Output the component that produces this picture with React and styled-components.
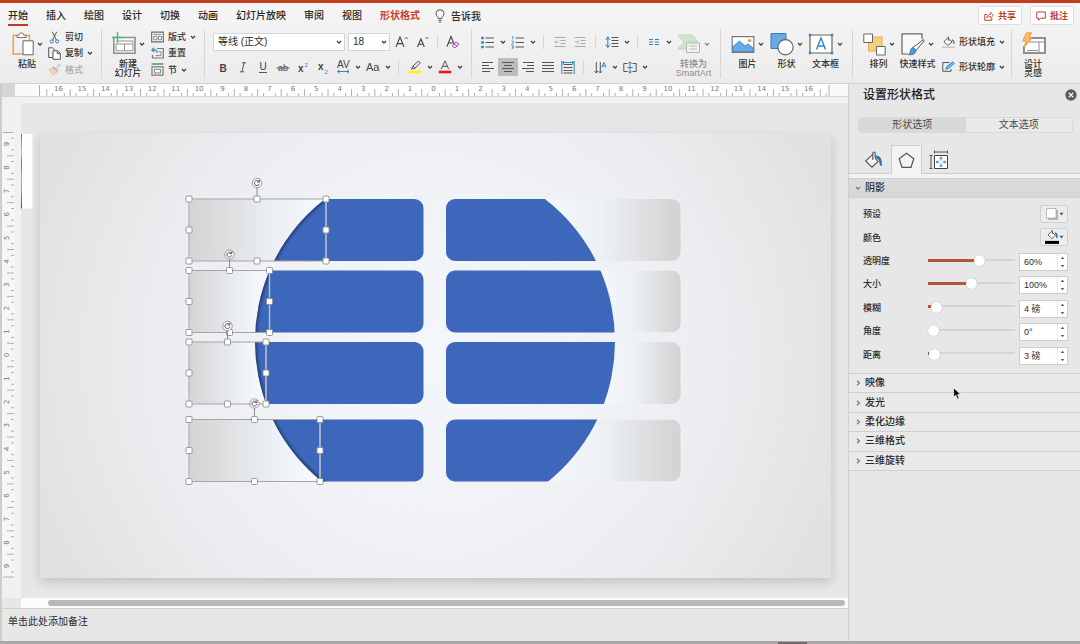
import React, { useState } from "react";
import styled, { createGlobalStyle } from "styled-components";

const GlobalStyle = createGlobalStyle`
  * {
    box-sizing: border-box;
  }
  body {
    margin: 0;
    background: #e7e7e7;
    font-family: "Liberation Sans", "Noto Sans CJK SC", sans-serif;
    color: #2b2b2b;
  }
  button, input, select, textarea {
    font: inherit;
    color: inherit;
    margin: 0;
  }
`;

const Window = styled.div`
  display: flex;
  flex-direction: column;
  min-height: 100vh;
  border-top: 3px solid #c03d1e;
`;

const Header = styled.header`
  background: linear-gradient(#f6f5f5, #f1f0f0 60%, #ebebeb);
  border-bottom: 1px solid #d2d2d2;
`;

const TabBar = styled.nav`
  display: flex;
  align-items: center;
  height: 25px;
  padding: 0 6px 0 8px;
  gap: 18px;
`;

const TabLink = styled.a`
  height: 21px;
  line-height: 21px;
  font-size: 10px;
  font-weight: ${(props) => (props.$accent ? 700 : 500)};
  color: ${(props) => (props.$accent ? "#c8422a" : "#262626")};
  text-decoration: none;
  border-bottom: 2px solid ${(props) => (props.$active ? "#c33a20" : "transparent")};
  white-space: nowrap;
`;

const TellMe = styled.button`
  display: flex;
  align-items: center;
  gap: 6px;
  margin-left: -3px;
  padding: 0;
  border: none;
  background: none;
  font-size: 10px;
  font-weight: 500;
`;

const HeaderActions = styled.div`
  display: flex;
  gap: 8px;
  margin-left: auto;
`;

const ActionButton = styled.button`
  display: flex;
  align-items: center;
  justify-content: center;
  gap: 4px;
  width: 44px;
  height: 19px;
  padding: 0;
  border: 1px solid #dedede;
  border-radius: 2px;
  background: white;
  color: #b8442c;
  font-size: 9px;
  font-weight: 700;
`;

const RibbonBar = styled.div`
  display: flex;
  height: 55px;
  padding: 1px 0 5px;
`;

const Group = styled.div`
  display: flex;
  width: ${(props) => props.$width}px;
  padding-left: ${(props) => props.$pad || 0}px;
  border-right: ${(props) => (props.$last ? "none" : "1px solid #d6d6d6")};
`;

const SmallColumn = styled.div`
  display: flex;
  flex-direction: column;
  gap: ${(props) => props.$gap || 0}px;
  padding-top: ${(props) => (props.$gap ? 4 : 0)}px;
  margin-left: ${(props) => props.$indent || 0}px;
`;

const SmallButton = styled.button`
  display: flex;
  align-items: center;
  gap: 4px;
  height: ${(props) => (props.$tall ? 18 : 17)}px;
  padding: 0;
  border: none;
  background: none;
  font-size: 9px;
  font-weight: 500;
  line-height: 12px;
  white-space: nowrap;
  color: ${(props) => (props.disabled ? "#a9a9a9" : "#303030")};
`;

const BigButton = styled.button`
  display: flex;
  flex-direction: column;
  align-items: center;
  width: ${(props) => props.$width || 39}px;
  padding: 3px 0 0;
  border: none;
  background: none;
  font-size: 9px;
  font-weight: 500;
  line-height: 9px;
  white-space: nowrap;
  color: ${(props) => (props.disabled ? "#8d8d8d" : "#303030")};
`;

const BigIcon = styled.span`
  display: flex;
  align-items: center;
  gap: 3px;
  height: 24px;
  margin-bottom: 4px;
  opacity: ${(props) => (props.$faded ? 0.6 : 1)};
`;

const ToolRows = styled.div`
  display: flex;
  flex-direction: column;
  gap: 7px;
  padding-top: 4px;
`;

const ToolRow = styled.div`
  display: flex;
  align-items: center;
  height: 18px;
`;

const ToolButton = styled.button`
  display: flex;
  align-items: center;
  justify-content: center;
  width: ${(props) => props.$width || 20}px;
  height: 18px;
  padding: 0;
  border: none;
  border-radius: 1px;
  background: ${(props) => (props.$active ? "#bdbdbd" : "none")};
  opacity: ${(props) => (props.disabled ? 0.45 : 1)};
  color: #444;
`;

const RowDivider = styled.span`
  width: 1px;
  height: 14px;
  margin: 0 6px 0 5px;
  background: #d6d6d6;
`;

const SelectBox = styled.label`
  position: relative;
  display: block;
  width: ${(props) => props.$width}px;
  margin-right: ${(props) => props.$after || 0}px;
  select {
    display: block;
    appearance: none;
    width: 100%;
    height: 18px;
    padding: 0 12px 0 4px;
    border: 1px solid #d4d4d4;
    border-radius: 1px;
    background: white;
    font-size: 10px;
    line-height: 14px;
  }
  svg {
    position: absolute;
    right: 3px;
    top: 6px;
    pointer-events: none;
  }
`;

const Body = styled.main`
  display: flex;
  flex: 1;
  border-left: 2px solid #cdcdcd;
`;

const Workspace = styled.section`
  display: flex;
  flex-direction: column;
  flex: 1;
  min-width: 0;
`;

const RulerSvg = styled.svg`
  display: block;
  flex: none;
  width: ${(props) => (props.$vertical ? "13px" : "100%")};
  background: #f0f0f0;
`;

const Stage = styled.div`
  display: flex;
  align-items: flex-start;
`;

const Canvas = styled.div`
  flex: 1;
  padding: 6px 0 0 6px;
  background: #f1f1f1;
  svg {
    display: block;
    width: 100%;
    background: #e7e7e8;
  }
`;

const ScrollTrack = styled.div`
  height: 10px;
  margin-left: 19px;
  padding: 2px 3px 2px 27px;
  background: #fbfbfb;
`;

const ScrollThumb = styled.div`
  height: 6px;
  border-radius: 3px;
  background: #b8b8b8;
`;

const Notes = styled.textarea`
  flex: 1 1 auto;
  display: block;
  width: 100%;
  height: 33px;
  padding: 5px 6px;
  border: none;
  border-top: 1px solid #cfcfcf;
  background: #e7e7e7;
  resize: none;
  outline: none;
  overflow: hidden;
  font-family: "Liberation Serif", "Noto Sans CJK SC", serif;
  font-size: 10px;
  line-height: 15px;
`;

const WindowEdge = styled.footer`
  display: flex;
  justify-content: flex-end;
  height: 3px;
  padding: 1px 273px 0 0;
  background: #a9a7a8;
  &::after {
    content: "";
    width: 29px;
    background: #6f6b6c;
  }
`;

const Panel = styled.aside`
  position: relative;
  flex: none;
  width: 232px;
  border-left: 1px solid #cfcfcf;
  background: #e7e7e7;
`;

const PanelHeader = styled.div`
  display: flex;
  align-items: center;
  justify-content: space-between;
  height: 22px;
  padding: 0 3px 0 14px;
  h2 {
    margin: 0;
    font-size: 12px;
    font-weight: 500;
    line-height: 20px;
    color: #222;
  }
  button {
    display: flex;
    padding: 0;
    border: none;
    background: none;
  }
`;

const Segments = styled.div`
  display: grid;
  grid-template-columns: 1fr 1fr;
  margin: 11px 7px 0 9px;
  border: 1px solid #dadada;
  border-radius: 3px;
  overflow: hidden;
`;

const Segment = styled.button`
  height: 14px;
  padding: 0;
  border: none;
  background: ${(props) => (props.$active ? "#d8d8d8" : "#e9e9e9")};
  color: #4a4a4a;
  font-size: 10px;
  line-height: 14px;
`;

const IconTabs = styled.div`
  display: flex;
  height: 41px;
  padding: 12px 0 0 8px;
  border-bottom: 1px solid #cdcdcd;
  box-shadow: 0 4px 0 #f3f3f3;
`;

const IconTab = styled.button`
  display: flex;
  align-items: center;
  justify-content: center;
  width: ${(props) => (props.$active ? 31 : 34)}px;
  height: ${(props) => (props.$active ? 29 : 28)}px;
  padding: 0;
  border: 1px solid ${(props) => (props.$active ? "#cdcdcd" : "transparent")};
  border-bottom: none;
  background: ${(props) => (props.$active ? "#f3f3f3" : "none")};
`;

const SectionHead = styled.button`
  display: flex;
  align-items: center;
  gap: 4px;
  width: 100%;
  height: ${(props) => (props.$open ? "20px" : "100%")};
  margin-top: ${(props) => (props.$open ? 4 : 0)}px;
  padding: 0 6px;
  border: none;
  border-top: 1px solid #d0d0d0;
  border-bottom: ${(props) => (props.$open ? "1px solid #d0d0d0" : "none")};
  background: ${(props) => (props.$open ? "linear-gradient(#dcdcdc, #d6d6d6)" : "#e9e9e9")};
  font-size: 10px;
  font-weight: 500;
  line-height: 14px;
`;

const Properties = styled.div`
  display: grid;
  grid-template-columns: minmax(0, 1fr);
  grid-auto-rows: 1fr;
  height: 164px;
  margin: 4px 12px 7px 14px;
`;

const PropertyRow = styled.div`
  display: flex;
  align-items: center;
  font-size: 9px;
  > label, > span {
    width: 65px;
    font-weight: 500;
  }
`;

const MenuButton = styled.button`
  display: flex;
  align-items: center;
  justify-content: space-between;
  width: 28px;
  height: 18px;
  margin-left: auto;
  padding: 0 3px 0 4px;
  border: 1px solid #cfcfcf;
  border-radius: 2px;
  background: #ececec;
`;

const Slider = styled.input`
  appearance: none;
  flex: 1;
  min-width: 0;
  height: 12px;
  margin-right: 4px;
  background: linear-gradient(#b5533a, #b5533a) left 4px / ${(props) => props.$fill}% 3px no-repeat,
    linear-gradient(#d4d4d4, #d4d4d4) left 4px / 100% 2px no-repeat;
  &::-webkit-slider-thumb {
    appearance: none;
    width: 11px;
    height: 11px;
    border-radius: 50%;
    background: white;
    box-shadow: 0 0 1px rgba(0, 0, 0, 0.35);
  }
`;

const SpinBox = styled.div`
  display: flex;
  width: 49px;
  height: 18px;
  margin-top: 3px;
  border: 1px solid #cdcdcd;
  background: white;
  input {
    flex: 1;
    min-width: 0;
    padding: 0 0 0 4px;
    border: none;
    outline: none;
    background: none;
    font-size: 9px;
    line-height: 12px;
  }
`;

const Steps = styled.div`
  display: flex;
  flex-direction: column;
  width: 10px;
  border-left: 1px dotted #d8d8d8;
  button {
    display: flex;
    flex: 1;
    align-items: center;
    justify-content: center;
    padding: 0;
    border: none;
    background: none;
  }
`;

const Sections = styled.div`
  display: grid;
  grid-auto-rows: 1fr;
  height: 98px;
  border-bottom: 1px solid #d0d0d0;
`;

const Pointer = styled.svg`
  position: absolute;
  left: 104px;
  top: 303px;
  pointer-events: none;
`;

function Icon({ w = 14, h = 14, vb, children }) {
  return (
    <svg
      width={w}
      height={h}
      viewBox={vb || `0 0 ${w} ${h}`}
      fill="none"
      stroke="#555"
      strokeWidth="1"
      aria-hidden="true"
    >
      {children}
    </svg>
  );
}

function Caret({ dir = "down", color = "#3c3c3c" }) {
  return (
    <Icon w={6} h={6}>
      <path
        d={dir === "down" ? "M1 2 L3 4.2 L5 2" : "M2 .7 L4.4 3 L2 5.3"}
        stroke={color}
        strokeWidth="1.2"
      />
    </Icon>
  );
}

function Lines({ rows, color = "#555" }) {
  return rows.map(([x1, x2], i) => (
    <path key={i} d={`M${x1} ${1.5 + i * 3} H${x2}`} stroke={color} />
  ));
}

const blue = "#2f86c6";

const icons = {
  bulb: (
    <Icon w={10} h={14}>
      <path d="M3.3 9.5 C3.3 7.8 1 7.2 1 4.6 A4 3.9 0 0 1 9 4.6 C9 7.2 6.7 7.8 6.7 9.5 Z M3.3 11.3 H6.7 M4 13 H6" />
    </Icon>
  ),
  share: (
    <Icon w={10} h={10}>
      <g stroke="#b8442c">
        <path d="M3 3.5 H.8 V9.3 H7.8 V7" />
        <path d="M2.8 7 C3 4.5 4.5 3.4 6.4 3.4 V1.2 L9.5 4.2 L6.4 7 V5.2 C4.8 5.2 3.6 5.8 2.8 7 Z" strokeWidth=".8" />
      </g>
    </Icon>
  ),
  comment: (
    <Icon w={10} h={10}>
      <path d="M.8 1 H9.3 V7.2 H4.6 L2.6 9.3 V7.2 H.8 Z" stroke="#b8442c" />
    </Icon>
  ),
  paste: (
    <Icon w={22} h={24}>
      <path d="M5.5 3.5 H1.2 V22 H10.5 M13.5 3.5 H17.5 V8" stroke="#eaa03e" strokeWidth="1.4" />
      <path d="M5 5.5 V3.2 H7 Q7 .8 9.4 .8 Q11.8 .8 11.8 3.2 H14 V5.5 Z" fill="#fff" stroke="#777" />
      <path d="M11 8.8 H21.2 V22.8 H11 Z" fill="#fff" stroke="#666" />
    </Icon>
  ),
  cut: (
    <Icon w={13} h={13}>
      <path d="M4.3 .8 L8.5 9.3 M8.7 .8 L4.5 9.3" />
      <g stroke={blue}>
        <circle cx="3.8" cy="10.4" r="1.6" />
        <circle cx="9.2" cy="10.4" r="1.6" />
      </g>
    </Icon>
  ),
  copy: (
    <Icon w={13} h={13}>
      <path d="M5 10.5 H.7 V.8 H4.4 L6.8 3 V4" />
      <path d="M5 3.8 H9.6 L12.3 6.3 V12.3 H5 Z M9.3 4 V6.6 H12" fill="#fff" />
    </Icon>
  ),
  painter: (
    <Icon w={13} h={13}>
      <g stroke="#c2bcb8">
        <path d="M8 4.6 L11.3 1 L12.4 2.2 L9.2 5.8" />
        <path d="M4.5 4.6 L9.2 9 L5 12 L1 6.8 Z" fill="#f3d3bd" stroke="#e3bfa8" />
        <path d="M5 3.8 L10 8.4" strokeWidth="1.6" />
      </g>
    </Icon>
  ),
  newSlide: (
    <Icon w={24} h={24}>
      <path d="M1.8 5.5 H23 V21.2 H1.8 Z" fill="#fff" stroke="#8f8f8f" strokeWidth="1.6" />
      <path d="M4 9 H21 V11.5 M4 12 H21 V18.8 H4 Z M12.5 12 V18.8" stroke="#8f8f8f" />
      <path d="M5.5 0 V11 M0 5.5 H11" stroke="#55b978" strokeWidth="1.4" />
    </Icon>
  ),
  layout: (
    <Icon w={13} h={12}>
      <path d="M.7 1.2 H12.3 V10.8 H.7 Z" fill="#fff" strokeWidth="1.2" stroke="#6a6a6a" />
      <path d="M2.5 3.3 H10.5 M2.8 5.3 H6 V8.8 H2.8 Z M7.4 5.3 H10.4 V8.8 H7.4 Z" stroke="#777" strokeWidth=".9" />
    </Icon>
  ),
  reset: (
    <Icon w={13} h={12}>
      <path d="M6 1.5 H12.3 V11 H1.5 V8" stroke="#777" strokeWidth="1.2" />
      <path d="M4.5 8.6 H10 V4.5 H7.5" stroke="#888" />
      <path d="M3.2 .6 L.9 2.9 L3.2 5.2 M1 2.9 H4 Q6.2 3 6 6" stroke={blue} strokeWidth="1.2" />
    </Icon>
  ),
  section: (
    <Icon w={13} h={13}>
      <path d="M.5 1 H12.5" stroke="#4fb070" strokeWidth="1.8" />
      <path d="M1 3.8 H12 V12.2 H1 Z" fill="#fff" stroke="#777" strokeWidth="1.2" />
      <path d="M3.3 6.2 H9.7 V10 H3.3 Z" stroke="#777" />
    </Icon>
  ),
  grow: (
    <Icon w={16} h={14}>
      <path d="M2 12 L6 2 L10 12 M3.4 8.6 H8.6" stroke="#444" strokeWidth="1.1" />
      <path d="M10.4 4 L12.2 2 L14 4" stroke={blue} />
    </Icon>
  ),
  shrink: (
    <Icon w={16} h={14}>
      <path d="M2.5 12 L5.9 4 L9.3 12 M3.7 9.2 H8" stroke="#444" strokeWidth="1.1" />
      <path d="M10.2 2 L11.8 3.8 L13.4 2" stroke={blue} />
    </Icon>
  ),
  clear: (
    <Icon w={14} h={14}>
      <path d="M1 11.5 L5 1.5 L8 8.5 M2.3 8 H7" stroke="#444" strokeWidth="1.1" />
      <path d="M6.3 10.6 L10 7 L13 9.2 L9.3 12.7 H8 Z M8 9 L11 11.2" fill="#f6e4f7" stroke="#a646ad" />
    </Icon>
  ),
  spacing: (
    <Icon w={14} h={14}>
      <path d="M.8 5 L2.8 1.8 L4.8 5 M2.8 1.8 V12.5 M.8 9.5 L2.8 12.5 L4.8 9.5" stroke={blue} />
      <path d="M6.5 2.5 H13.5 M6.5 5.5 H13.5 M6.5 8.5 H13.5 M6.5 11.5 H13.5" />
    </Icon>
  ),
  bullets: (
    <Icon w={14} h={13}>
      <path d="M4.5 2 H13 M4.5 6.5 H13 M4.5 11 H13" />
      <path d="M.5 1 H2.5 V3 H.5 Z M.5 5.5 H2.5 V7.5 H.5 Z M.5 10 H2.5 V12 H.5 Z" fill={blue} stroke={blue} strokeWidth=".6" />
    </Icon>
  ),
  numbers: (
    <Icon w={14} h={13}>
      <path d="M4.5 2 H13 M4.5 6.5 H13 M4.5 11 H13" />
      <path d="M.8 .9 L1.8 .4 V3.4 M.5 5.2 H2.3 V6.4 L.6 8 H2.5 M.5 9.7 H2.2 V12.3 H.5 M1 11 H2.2" stroke={blue} strokeWidth=".8" />
    </Icon>
  ),
  outdent: (
    <Icon w={12} h={12}>
      <path d="M.5 1.5 H11.5 M6.5 4.5 H11.5 M6.5 7.5 H11.5 M.5 10.5 H11.5" />
      <path d="M5 6 H.8 M2.6 4.2 L.8 6 L2.6 7.8" stroke={blue} />
    </Icon>
  ),
  indent: (
    <Icon w={12} h={12}>
      <path d="M.5 1.5 H11.5 M6.5 4.5 H11.5 M6.5 7.5 H11.5 M.5 10.5 H11.5" />
      <path d="M.5 6 H4.8 M3 4.2 L4.8 6 L3 7.8" stroke={blue} />
    </Icon>
  ),
  columns: (
    <Icon w={12} h={8}>
      <path d="M1 1.5 H5 M1 4 H5 M1 6.5 H5 M7 1.5 H11 M7 4 H11 M7 6.5 H11" stroke={blue} />
    </Icon>
  ),
  left: (
    <Icon w={12} h={13}>
      <Lines rows={[[0, 11], [0, 7], [0, 12], [0, 8]]} />
    </Icon>
  ),
  center: (
    <Icon w={12} h={13}>
      <Lines rows={[[0, 12], [2, 10], [0, 12], [2, 10]]} />
    </Icon>
  ),
  right: (
    <Icon w={12} h={13}>
      <Lines rows={[[1, 12], [5, 12], [0, 12], [4, 12]]} />
    </Icon>
  ),
  justify: (
    <Icon w={12} h={13}>
      <Lines rows={[[0, 12], [0, 12], [0, 12], [0, 12]]} />
    </Icon>
  ),
  distribute: (
    <Icon w={14} h={13}>
      <path d="M2.5 3.5 H11.5 M2.5 6.5 H11.5 M2.5 9.5 H11.5 M2.5 12 H11.5" />
      <path d="M.8 0 V13 M13.2 0 V13 M1 1.5 H13 M3 .2 L1.5 1.5 L3 2.8 M11 .2 L12.5 1.5 L11 2.8" stroke={blue} />
    </Icon>
  ),
  textDir: (
    <Icon w={13} h={13}>
      <path d="M2.3 1 V12 M.5 10 L2.3 12 L4 10 M6.3 1 V12 M4.8 10.3 L6.3 12 L8 10.3" />
      <path d="M7.8 6.5 L9.9 1.5 L12 6.5 M8.6 5 H11.2" stroke={blue} />
    </Icon>
  ),
  alignText: (
    <Icon w={14} h={13}>
      <path d="M4.5 2.5 H.8 V10.5 H4.5 M9.5 2.5 H13.2 V10.5 H9.5" />
      <path d="M7 .8 V12.2 M5.4 2.6 L7 .8 L8.6 2.6 M5.4 10.4 L7 12.2 L8.6 10.4 M4.2 6.5 H9.8" stroke={blue} />
    </Icon>
  ),
  smartArt: (
    <Icon w={24} h={20}>
      <path d="M.8 1 H15 L21 8 H11 V13 L9 15 H1 L7 8 Z" fill="#b5dcb8" stroke="#93c69a" />
      <path d="M9.5 9 H22.5 V18.5 H9.5 Z" fill="#f5f5f5" stroke="#8e8e8e" />
      <path d="M12 12 H20 M12 15 H20" stroke="#9a9a9a" />
    </Icon>
  ),
  picture: (
    <Icon w={24} h={20}>
      <path d="M1.2 2.7 H22.8 V18.3 H1.2 Z" fill="#fff" stroke="#777" strokeWidth="1.2" />
      <path d="M2 17.5 V12.5 L8.5 7 L14 12 L17 9.8 L22 14 V17.5 Z" fill="#6aaae4" stroke="#2f7fc5" strokeWidth=".8" />
      <circle cx="18.6" cy="6.6" r="1.7" fill="#ee9b3e" stroke="none" />
    </Icon>
  ),
  shapes: (
    <Icon w={24} h={24}>
      <path d="M1 1.5 H16 V16.5 H1 Z" fill="#6aaae4" stroke="#2f7fc5" />
      <circle cx="15.5" cy="15.3" r="7.6" fill="#fff" stroke="#666" strokeWidth="1.2" />
    </Icon>
  ),
  textBox: (
    <Icon w={26} h={22}>
      <path d="M2 2 H24 V20 H2 Z" fill="#fff" stroke="#666" strokeWidth="1.2" />
      <path d="M8.5 16.5 L13 5 L17.5 16.5 M10 13 H16" stroke={blue} strokeWidth="1.4" />
      <path d="M.8 .8 H3.2 V3.2 H.8 Z M22.8 .8 H25.2 V3.2 H22.8 Z M.8 18.8 H3.2 V21.2 H.8 Z M22.8 18.8 H25.2 V21.2 H22.8 Z" fill={blue} stroke="none" />
    </Icon>
  ),
  arrange: (
    <Icon w={23} h={24}>
      <path d="M5.5 5 H19 V19 H5.5 Z" fill="#f8cf7c" stroke="#e8ad4c" />
      <path d="M.8 2 H9.5 V10.5 H.8 Z M13.5 14.5 H22.2 V23 H13.5 Z" fill="#fff" stroke="#666" />
    </Icon>
  ),
  styles: (
    <Icon w={24} h={24}>
      <path d="M21 7 V1.8 H1 V22 H7" fill="#f8f8f8" stroke="#666" strokeWidth="1.2" />
      <path d="M12 15.5 L22.5 7.5 L23 9 L15 18.5 Z" fill="#fff" stroke="#555" />
      <path d="M12 15.5 L15 18.5 Q14.5 23 7.5 22.8 Q10 21 9.5 18.5 Q10 16 12 15.5 Z" fill="#4e9ad9" stroke="#2b78bb" />
    </Icon>
  ),
  fill: (
    <Icon w={13} h={12}>
      <path d="M5.5 2 L10 6 L6 9.3 L2 5.8 Z M6.4 .6 V4.8" fill="#fff" />
      <path d="M9.8 4 Q12.2 4.4 12 8" stroke={blue} strokeWidth="1.3" />
      <path d="M0 11.2 H13" stroke="#c9c9c9" strokeWidth="1.6" />
    </Icon>
  ),
  outline: (
    <Icon w={13} h={12}>
      <path d="M7.5 1.5 H.8 V10.3 H9 V8" />
      <path d="M3.8 8.2 L4.6 5.8 L10.7 .8 L12.3 2.5 L6.2 7.6 Z" fill="#7cbaea" stroke={blue} />
    </Icon>
  ),
  designer: (
    <Icon w={25} h={24}>
      <path d="M6 6 H24 V21 H3 V14" fill="#fff" stroke="#8f8f8f" strokeWidth="2" />
      <path d="M8 10 H23 M18 10 V20 M6 18.5 H17" stroke="#8f8f8f" />
      <path d="M5.5 .8 H10.5 L8 6 H11 L3 15.5 L5 9 H1.8 Z" fill="#f8bd6c" stroke="#ec9a3c" />
    </Icon>
  ),
};

const glyph = { fontFamily: "Liberation Sans, sans-serif", stroke: "none", fill: "#444" };

// letter based tools are drawn as live text inside the icon box
function LetterIcon({ kind }) {
  switch (kind) {
    case "bold":
      return (
        <Icon w={12} h={13}>
          <text x="2.5" y="10.5" fontSize="10" fontWeight="bold" {...glyph}>B</text>
        </Icon>
      );
    case "italic":
      return (
        <Icon w={12} h={13}>
          <path d="M5 1.8 H9 M3 10.8 H7 M7 1.8 L5 10.8" />
        </Icon>
      );
    case "underline":
      return (
        <Icon w={12} h={14}>
          <text x="2.5" y="10" fontSize="10" {...glyph}>U</text>
          <path d="M2 12.5 H10" />
        </Icon>
      );
    case "strike":
      return (
        <Icon w={14} h={13}>
          <text x="2" y="10" fontSize="9" {...glyph}>ab</text>
          <path d="M.5 7 H13.5" />
        </Icon>
      );
    case "sup":
      return (
        <Icon w={14} h={13}>
          <text x="2" y="11" fontSize="10" fontWeight="bold" {...glyph}>x</text>
          <text x="8.5" y="6" fontSize="6" {...glyph} fill={blue}>2</text>
        </Icon>
      );
    case "sub":
      return (
        <Icon w={14} h={14}>
          <text x="2" y="10" fontSize="10" fontWeight="bold" {...glyph}>x</text>
          <text x="8.5" y="13.5" fontSize="6" {...glyph} fill={blue}>2</text>
        </Icon>
      );
    case "kerning":
      return (
        <Icon w={15} h={14}>
          <text x="1" y="8" fontSize="10" {...glyph}>AV</text>
          <path d="M1.5 11.5 H13 M3.5 9.7 L1.5 11.5 L3.5 13.3 M11 9.7 L13 11.5 L11 13.3" stroke={blue} />
        </Icon>
      );
    case "case":
      return (
        <Icon w={16} h={13}>
          <text x="1" y="10" fontSize="11" {...glyph}>Aa</text>
        </Icon>
      );
    case "highlight":
      return (
        <Icon w={14} h={14}>
          <path d="M3.5 9 L5 6 L10.5 1 L12.3 3 L7 8.2 Z M5 6 L7 8.2" />
          <path d="M.5 12 H13.5" stroke="#fbf21c" strokeWidth="2.6" />
        </Icon>
      );
    default:
      return (
        <Icon w={14} h={14}>
          <path d="M3.4 9 L7 .8 L10.6 9 M4.7 6.3 H9.3" />
          <path d="M.8 12 H13.2" stroke="#e8141b" strokeWidth="2.6" />
        </Icon>
      );
  }
}

function Tool({ label, icon, menu, active, disabled, width }) {
  return (
    <>
      <ToolButton type="button" aria-label={label} $active={active} $width={width} disabled={disabled}>
        {icon}
      </ToolButton>
      {menu && (
        <ToolButton type="button" aria-label={`${label}选项`} $width={10}>
          <Caret />
        </ToolButton>
      )}
    </>
  );
}

function Big({ icon, lines, width, menu = true, disabled }) {
  return (
    <BigButton type="button" $width={width} disabled={disabled}>
      <BigIcon $faded={disabled}>
        {icon}
        {menu && <Caret />}
      </BigIcon>
      {lines.map((line) => (
        <span key={line}>{line}</span>
      ))}
    </BigButton>
  );
}

function Small({ icon, label, menu, disabled, tall }) {
  return (
    <SmallButton type="button" disabled={disabled} $tall={tall}>
      {icon}
      {label}
      {menu && <Caret />}
    </SmallButton>
  );
}

function Ribbon() {
  return (
    <RibbonBar>
      <Group $width={102} $pad={10}>
        <Big icon={icons.paste} lines={["粘贴"]} width={34} />
        <SmallColumn $indent={4}>
          <Small icon={icons.cut} label="剪切" />
          <Small icon={icons.copy} label="复制" menu />
          <Small icon={icons.painter} label="格式" disabled />
        </SmallColumn>
      </Group>
      <Group $width={103} $pad={8}>
        <Big icon={icons.newSlide} lines={["新建", "幻灯片"]} width={36} />
        <SmallColumn $indent={5}>
          <Small icon={icons.layout} label="版式" menu />
          <Small icon={icons.reset} label="重置" />
          <Small icon={icons.section} label="节" menu />
        </SmallColumn>
      </Group>
      <Group $width={267} $pad={8}>
        <ToolRows>
          <ToolRow>
            <SelectBox $width={132} $after={3}>
              <select aria-label="字体">
                <option>等线 (正文)</option>
              </select>
              <Caret />
            </SelectBox>
            <SelectBox $width={42}>
              <select aria-label="字号">
                <option>18</option>
              </select>
              <Caret />
            </SelectBox>
            <Tool label="增大字号" icon={icons.grow} width={24} />
            <Tool label="减小字号" icon={icons.shrink} width={18} />
            <RowDivider />
            <Tool label="清除格式" icon={icons.clear} width={18} />
          </ToolRow>
          <ToolRow>
            <Tool label="加粗" icon={<LetterIcon kind="bold" />} />
            <Tool label="倾斜" icon={<LetterIcon kind="italic" />} />
            <Tool label="下划线" icon={<LetterIcon kind="underline" />} />
            <Tool label="删除线" icon={<LetterIcon kind="strike" />} />
            <Tool label="上标" icon={<LetterIcon kind="sup" />} />
            <Tool label="下标" icon={<LetterIcon kind="sub" />} />
            <Tool label="字符间距" icon={<LetterIcon kind="kerning" />} menu />
            <Tool label="更改大小写" icon={<LetterIcon kind="case" />} menu />
            <RowDivider />
            <Tool label="突出显示" icon={<LetterIcon kind="highlight" />} menu />
            <Tool label="字体颜色" icon={<LetterIcon kind="color" />} menu />
          </ToolRow>
        </ToolRows>
      </Group>
      <Group $width={249} $pad={6}>
        <ToolRows>
          <ToolRow>
            <Tool label="项目符号" icon={icons.bullets} menu />
            <Tool label="编号" icon={icons.numbers} menu />
            <RowDivider />
            <Tool label="减少缩进" icon={icons.outdent} disabled />
            <Tool label="增加缩进" icon={icons.indent} disabled />
            <RowDivider />
            <Tool label="行距" icon={icons.spacing} menu />
            <RowDivider />
            <Tool label="分栏" icon={icons.columns} menu />
          </ToolRow>
          <ToolRow>
            <Tool label="左对齐" icon={icons.left} />
            <Tool label="居中" icon={icons.center} active />
            <Tool label="右对齐" icon={icons.right} />
            <Tool label="两端对齐" icon={icons.justify} />
            <Tool label="分散对齐" icon={icons.distribute} />
            <RowDivider />
            <Tool label="文字方向" icon={icons.textDir} menu />
            <Tool label="对齐文本" icon={icons.alignText} menu />
          </ToolRow>
        </ToolRows>
        <Big icon={icons.smartArt} lines={["转换为", "SmartArt"]} disabled />
      </Group>
      <Group $width={132} $pad={7}>
        <Big icon={icons.picture} lines={["图片"]} />
        <Big icon={icons.shapes} lines={["形状"]} />
        <Big icon={icons.textBox} lines={["文本框"]} />
      </Group>
      <Group $width={159} $pad={6}>
        <Big icon={icons.arrange} lines={["排列"]} />
        <Big icon={icons.styles} lines={["快速样式"]} />
        <SmallColumn $indent={5} $gap={7}>
          <Small icon={icons.fill} label="形状填充" menu tall />
          <Small icon={icons.outline} label="形状轮廓" menu tall />
        </SmallColumn>
      </Group>
      <Group $width={60} $last>
        <Big icon={icons.designer} lines={["设计", "灵感"]} width={42} menu={false} />
      </Group>
    </RibbonBar>
  );
}

const UNIT = 23.44;

function Ruler({ vertical }) {
  const count = vertical ? 9 : 16;
  const center = vertical ? 355 : 433.5;
  const start = vertical ? 132.5 : 39.5;
  const end = vertical ? 577 : 829;
  const ticks = [];
  for (let i = -count * 4 - 3; i <= count * 4 + 3; i++) {
    const pos = center + (i * UNIT) / 4;
    if (i % 4 === 0 || pos < start + 2 || pos > end - 2) continue;
    ticks.push([pos, Math.abs(i) % 4 === 2]);
  }
  const tick = (pos, size) => (vertical ? `M${14 - size} ${pos} h${size}` : `M${pos} 96 v-${size}`);
  return (
    <RulerSvg
      $vertical={vertical}
      viewBox={vertical ? "2 97 13 501" : "2 84 846 13"}
      aria-hidden="true"
    >
      {vertical ? (
        <path d="M2 132 H15 V577 H2 Z" fill="#f6f6f6" />
      ) : (
        <>
          <path d="M15 84 H848 V97 H15 Z" fill="#fafafa" />
          <path d="M39 84 H829 V97 H39 Z" fill="#fff" />
          <path d="M2 84 H15 V97 H2 Z" fill="#d6d6d6" />
          <path d="M15 96.5 H848" stroke="#d6d6d6" />
        </>
      )}
      <g stroke="#b0b0b0" strokeWidth="1" fill="none">
        {ticks.map(([pos, tall]) => (
          <path key={pos} d={tick(pos, tall ? 7 : 3)} />
        ))}
        <path d={tick(start, 11)} />
        <path d={tick(end, 11)} />
      </g>
      <g fontFamily="DejaVu Sans, sans-serif" fontSize="7" fill="#777" textAnchor="middle">
        {Array.from({ length: count * 2 + 1 }, (_, i) => {
          const pos = center + (i - count) * UNIT;
          return vertical ? (
            <text key={i} transform={`translate(9 ${pos}) rotate(-90)`}>
              {Math.abs(i - count)}
            </text>
          ) : (
            <text key={i} x={pos} y="91">
              {Math.abs(i - count)}
            </text>
          );
        })}
      </g>
    </RulerSvg>
  );
}

const rows = [
  { top: 199, leftEdge: 326, rightEdge: 545, rotateX: 257 },
  { top: 270.5, leftEdge: 269.5, rightEdge: 600, rotateX: 229.5 },
  { top: 342, leftEdge: 266, rightEdge: 604, rotateX: 227.5 },
  { top: 419.5, leftEdge: 320, rightEdge: 549, rotateX: 254.5 },
];
const CARD_HEIGHT = 62;

function Selection({ top, right, rotateX }) {
  const left = 189;
  const bottom = top + CARD_HEIGHT;
  const midY = top + CARD_HEIGHT / 2;
  const handles = [
    [left, top], [rotateX, top], [right, top],
    [left, midY], [right, midY],
    [left, bottom], [rotateX, bottom], [right, bottom],
  ];
  return (
    <g fill="none" stroke="#a3a5a9">
      <path d={`M${left} ${top} H${right} V${bottom} H${left} Z`} />
      <path d={`M${right} ${top} V${bottom}`} stroke="#b9c0cf" strokeWidth="1.4" />
      <path d={`M${rotateX} ${top} V${top - 11}`} stroke="#8d8d8d" />
      <circle cx={rotateX} cy={top - 16} r="4.7" fill="#fff" stroke="#999" />
      <path
        d={`M${rotateX + 1.8} ${top - 17.6} A2.5 2.5 0 1 0 ${rotateX + 2.4} ${top - 15.4} M${rotateX + 2.4} ${top - 19.3} V${top - 17} H${rotateX}`}
        stroke="#444"
        strokeWidth=".9"
      />
      {handles.map(([x, y]) => (
        <rect key={`${x}-${y}`} x={x - 3} y={y - 3} width="6" height="6" rx="1" fill="#fff" stroke="#8f8f8f" strokeWidth=".9" />
      ))}
    </g>
  );
}

function Slide() {
  return (
    <svg viewBox="21 103 827 495" role="img" aria-label="幻灯片">
      <defs>
        <radialGradient id="slideBg" gradientUnits="userSpaceOnUse" cx="435" cy="355" r="430">
          <stop offset="0" stopColor="#f3f6fb" />
          <stop offset=".35" stopColor="#f1f3f7" />
          <stop offset=".65" stopColor="#ebedf0" />
          <stop offset="1" stopColor="#e1e1e1" />
        </radialGradient>
        <linearGradient id="fadeRight">
          <stop offset="0" stopColor="#d4d4d4" />
          <stop offset=".25" stopColor="#dddedf" />
          <stop offset=".65" stopColor="#ecf0f5" />
          <stop offset="1" stopColor="#f8fafd" />
        </linearGradient>
        <linearGradient id="fadeLeft">
          <stop offset="0" stopColor="#f4f7fc" />
          <stop offset=".4" stopColor="#edf1f6" />
          <stop offset=".75" stopColor="#dddedf" />
          <stop offset="1" stopColor="#d2d2d2" />
        </linearGradient>
        <filter id="slideShadow" x="-5%" y="-5%" width="110%" height="115%">
          <feGaussianBlur stdDeviation="6" />
        </filter>
        <filter id="edgeBlur">
          <feGaussianBlur stdDeviation="1" />
        </filter>
        <clipPath id="leftCards">
          {rows.map((row) => (
            <rect key={row.top} x="189" y={row.top} width="234.5" height={CARD_HEIGHT} rx="9" />
          ))}
        </clipPath>
        <clipPath id="rightCards">
          {rows.map((row) => (
            <rect key={row.top} x="446" y={row.top} width="234.5" height={CARD_HEIGHT} rx="9" />
          ))}
        </clipPath>
        <clipPath id="disc">
          <circle cx="435" cy="341.5" r="180" />
        </clipPath>
        <linearGradient id="accents" gradientUnits="userSpaceOnUse" x1="0" y1="134" x2="0" y2="208">
          <stop offset="0" stopColor="#d93f5c" />
          <stop offset=".25" stopColor="#eebf55" />
          <stop offset=".4" stopColor="#3d9a55" />
          <stop offset=".6" stopColor="#8cd06a" />
          <stop offset=".75" stopColor="#57b6c4" />
          <stop offset="1" stopColor="#3c5468" />
        </linearGradient>
      </defs>
      <rect x="21" y="134" width="11.5" height="74.5" fill="#fff" />
      <rect x="21" y="134" width="1" height="74.5" fill="url(#accents)" />
      <rect x="40" y="138" width="791" height="444" fill="#000" opacity=".16" filter="url(#slideShadow)" />
      <rect x="40" y="133" width="791" height="445" fill="url(#slideBg)" />
      <g clipPath="url(#leftCards)">
        {rows.map((row) => (
          <rect key={row.top} x="189" y={row.top} width={row.leftEdge - 189} height={CARD_HEIGHT} fill="url(#fadeRight)" />
        ))}
        <circle cx="435" cy="341.5" r="180" fill="#3c67ba" />
        <g clipPath="url(#disc)">
          <circle cx="435" cy="341.5" r="180" fill="none" stroke="#1d2f52" strokeWidth="4" opacity=".65" filter="url(#edgeBlur)" />
        </g>
      </g>
      <g clipPath="url(#rightCards)">
        {rows.map((row) => (
          <rect key={row.top} x={row.rightEdge} y={row.top} width={681 - row.rightEdge} height={CARD_HEIGHT} fill="url(#fadeLeft)" />
        ))}
        <circle cx="435" cy="341.5" r="180" fill="#3c67ba" />
      </g>
      {rows.map((row) => (
        <Selection key={row.top} top={row.top} right={row.leftEdge} rotateX={row.rotateX} />
      ))}
    </svg>
  );
}

const shadowProps = [
  { id: "opacity", label: "透明度", max: 100, value: 60, unit: "%" },
  { id: "size", label: "大小", max: 200, value: 100, unit: "%" },
  { id: "blur", label: "模糊", max: 100, value: 4, unit: " 磅" },
  { id: "angle", label: "角度", max: 359, value: 0, unit: "°" },
  { id: "distance", label: "距离", max: 200, value: 3, unit: " 磅" },
];

function ShadowProperty({ id, label, max, value, unit }) {
  const [current, setCurrent] = useState(value);
  const step = (by) => setCurrent(Math.min(max, Math.max(0, current + by)));
  return (
    <PropertyRow>
      <label htmlFor={id}>{label}</label>
      <Slider
        id={id}
        type="range"
        min="0"
        max={max}
        value={current}
        $fill={(current / max) * 100}
        onChange={(e) => setCurrent(Number(e.target.value))}
      />
      <SpinBox>
        <input
          aria-label={`${label}数值`}
          value={`${current}${unit}`}
          onChange={(e) => setCurrent(parseInt(e.target.value, 10) || 0)}
        />
        <Steps>
          <button type="button" aria-label={`增加${label}`} onClick={() => step(1)}>
            <Icon w={5} h={4}><path d="M.8 3 L2.5 .8 L4.2 3 Z" fill="#555" stroke="none" /></Icon>
          </button>
          <button type="button" aria-label={`减少${label}`} onClick={() => step(-1)}>
            <Icon w={5} h={4}><path d="M.8 1 L2.5 3.2 L4.2 1 Z" fill="#555" stroke="none" /></Icon>
          </button>
        </Steps>
      </SpinBox>
    </PropertyRow>
  );
}

function FormatPanel() {
  return (
    <Panel>
      <PanelHeader>
        <h2>设置形状格式</h2>
        <button type="button" aria-label="关闭">
          <Icon w={12} h={12}>
            <circle cx="6" cy="6" r="5.7" fill="#5a5a5a" stroke="none" />
            <path d="M3.8 3.8 L8.2 8.2 M8.2 3.8 L3.8 8.2" stroke="#eee" strokeWidth="1.3" />
          </Icon>
        </button>
      </PanelHeader>
      <Segments>
        <Segment type="button" $active>形状选项</Segment>
        <Segment type="button">文本选项</Segment>
      </Segments>
      <IconTabs>
        <IconTab type="button" aria-label="填充与线条">
          <Icon w={20} h={18}>
            <path d="M8.8 3.4 L1.6 10 L8 16.2 L14 10.4 L11 7.2" fill="#f8f8f8" stroke="#555" strokeWidth="1.1" />
            <path d="M8.8 9 V2.6 Q8.8 1 10 1 Q11.2 1 11.2 2.6 V7" stroke="#555" strokeWidth="1.1" />
            <path d="M11.6 4.6 Q18.2 3.8 18 15 Q15.8 15 15.4 12 L15 9.6 L11.6 6.4 Z" fill="#2f75a8" stroke="none" />
          </Icon>
        </IconTab>
        <IconTab type="button" aria-label="效果" $active>
          <Icon w={17} h={17}>
            <path d="M8.5 1.2 L15.8 6.7 L13 15.3 H4 L1.2 6.7 Z" stroke="#555" strokeWidth="1.2" />
          </Icon>
        </IconTab>
        <IconTab type="button" aria-label="大小与属性">
          <Icon w={20} h={20}>
            <path d="M5.5 5.5 H18.5 V18.5 H5.5 Z" fill="#fff" stroke="#444" />
            <path d="M5.5 2 H18.5 M5.5 .5 V3.5 M18.5 .5 V3.5 M2 5.5 V18.5 M.5 5.5 H3.5 M.5 18.5 H3.5" stroke="#555" />
            <path d="M12 7 V10.5 M12 13.5 V17 M7 12 H10.5 M13.5 12 H17 M10.5 8.7 L12 7.2 L13.5 8.7 M10.5 15.3 L12 16.8 L13.5 15.3 M8.7 10.5 L7.2 12 L8.7 13.5 M15.3 10.5 L16.8 12 L15.3 13.5" stroke={blue} />
          </Icon>
        </IconTab>
      </IconTabs>
      <SectionHead type="button" $open aria-expanded="true">
        <Caret color="#777" />
        阴影
      </SectionHead>
      <Properties>
        <PropertyRow>
          <span>预设</span>
          <MenuButton type="button" aria-label="预设">
            <Icon w={13} h={13}>
              <path d="M3 3 H13 V13 H3 Z" fill="#b5b5b5" stroke="none" />
              <path d="M1.5 1.5 H11 V11 H1.5 Z" fill="#fff" stroke="#aaa" strokeWidth=".8" />
            </Icon>
            <Icon w={5} h={4}><path d="M.5 .8 H4.5 L2.5 3.4 Z" fill="#555" stroke="none" /></Icon>
          </MenuButton>
        </PropertyRow>
        <PropertyRow>
          <span>颜色</span>
          <MenuButton type="button" aria-label="颜色">
            <Icon w={14} h={16}>
              <path d="M6.5 2.5 L10.5 6.3 L7 9.6 L3 6 Z M7.3 1 V5" fill="#fff" strokeWidth=".9" />
              <path d="M10 4 Q12.5 5 11.8 9" stroke="#2f75b5" strokeWidth="1.6" />
              <path d="M0 13.4 H14" stroke="#000" strokeWidth="3" />
            </Icon>
            <Icon w={5} h={4}><path d="M.5 .8 H4.5 L2.5 3.4 Z" fill="#555" stroke="none" /></Icon>
          </MenuButton>
        </PropertyRow>
        {shadowProps.map((prop) => (
          <ShadowProperty key={prop.id} {...prop} />
        ))}
      </Properties>
      <Sections>
        {["映像", "发光", "柔化边缘", "三维格式", "三维旋转"].map((title) => (
          <SectionHead key={title} type="button" aria-expanded="false">
            <Caret dir="right" color="#777" />
            {title}
          </SectionHead>
        ))}
      </Sections>
      <Pointer width="9" height="13" viewBox="0 0 9 13" aria-hidden="true">
        <path d="M.6 .8 V10.2 L2.8 8.2 L4.5 12.2 L6.2 11.4 L4.6 7.6 H7.8 Z" fill="#111" stroke="#fff" strokeWidth=".7" />
      </Pointer>
    </Panel>
  );
}

const tabs = ["开始", "插入", "绘图", "设计", "切换", "动画", "幻灯片放映", "审阅", "视图", "形状格式"];

export default function App() {
  return (
    <Window>
      <GlobalStyle />
      <Header>
        <TabBar>
          {tabs.map((tab, i) => (
            <TabLink key={tab} href="#" $active={i === 0} $accent={tab === "形状格式"}>
              {tab}
            </TabLink>
          ))}
          <TellMe type="button">
            {icons.bulb}
            告诉我
          </TellMe>
          <HeaderActions>
            <ActionButton type="button">
              {icons.share}
              共享
            </ActionButton>
            <ActionButton type="button">
              {icons.comment}
              批注
            </ActionButton>
          </HeaderActions>
        </TabBar>
        <Ribbon />
      </Header>
      <Body>
        <Workspace>
          <Ruler />
          <Stage>
            <Ruler vertical />
            <Canvas>
              <Slide />
            </Canvas>
          </Stage>
          <ScrollTrack>
            <ScrollThumb />
          </ScrollTrack>
          <Notes aria-label="备注" defaultValue="单击此处添加备注" />
        </Workspace>
        <FormatPanel />
      </Body>
      <WindowEdge />
    </Window>
  );
}
